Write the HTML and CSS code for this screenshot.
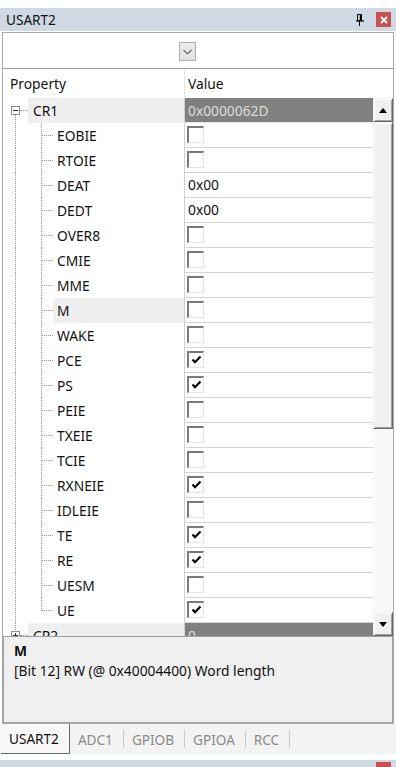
FILE: index.html
```html
<!DOCTYPE html>
<html>
<head>
<meta charset="utf-8">
<link rel="stylesheet" href="styles.css">
</head>
<body>
<div class="topgap"></div>
<div class="titlebar">
  <span class="title">USART2</span>
  <div class="tbtns">
    <svg class="pin" width="8" height="12" viewBox="0 0 8 12"><path d="M1.5 0.5h4v6h-4z" fill="none" stroke="#000" stroke-width="1"/><path d="M4.5 0.5v6" stroke="#000" stroke-width="1.5"/><path d="M0 7h8" stroke="#000" stroke-width="1.2"/><path d="M3.5 7v5" stroke="#000" stroke-width="1"/></svg>
    <span class="close"><svg width="8" height="8" viewBox="0 0 8 8"><path d="M1 1L7 7M7 1L1 7" stroke="#fff" stroke-width="1.8"/></svg></span>
  </div>
</div>
<div class="gap1"></div>
<div class="panel">
  <div class="toolbar">
    <span class="combo"><svg width="9" height="6" viewBox="0 0 9 6"><path d="M0.5 0.8L4.5 4.8L8.5 0.8" fill="none" stroke="#555" stroke-width="1.1"/></svg></span>
  </div>
  <div class="hdr">
    <div class="hp">Property</div>
    <div class="hv">Value</div>
  </div>
  <div class="grid">
    <div class="rows">
      <div class="row">
        <div class="prop cat"><span class="exp"><svg width="7" height="7" viewBox="0 0 7 7"><path d="M1 3.5h5" stroke="#333" stroke-width="1"/></svg></span><span class="hl"></span><span class="clbl">CR1</span></div>
        <div class="val catv">0x0000062D</div>
      </div>
      <div class="row"><div class="prop"><span class="g1"></span><span class="g2"></span><span class="br"></span><span class="lbl">EOBIE</span></div><div class="val"><span class="cb"></span></div></div>
      <div class="row"><div class="prop"><span class="g1"></span><span class="g2"></span><span class="br"></span><span class="lbl">RTOIE</span></div><div class="val"><span class="cb"></span></div></div>
      <div class="row"><div class="prop"><span class="g1"></span><span class="g2"></span><span class="br"></span><span class="lbl">DEAT</span></div><div class="val txt">0x00</div></div>
      <div class="row"><div class="prop"><span class="g1"></span><span class="g2"></span><span class="br"></span><span class="lbl">DEDT</span></div><div class="val txt">0x00</div></div>
      <div class="row"><div class="prop"><span class="g1"></span><span class="g2"></span><span class="br"></span><span class="lbl">OVER8</span></div><div class="val"><span class="cb"></span></div></div>
      <div class="row"><div class="prop"><span class="g1"></span><span class="g2"></span><span class="br"></span><span class="lbl">CMIE</span></div><div class="val"><span class="cb"></span></div></div>
      <div class="row"><div class="prop"><span class="g1"></span><span class="g2"></span><span class="br"></span><span class="lbl">MME</span></div><div class="val"><span class="cb"></span></div></div>
      <div class="row"><div class="prop"><span class="g1"></span><span class="g2"></span><span class="br"></span><span class="lbl sel">M</span></div><div class="val"><span class="cb"></span></div></div>
      <div class="row"><div class="prop"><span class="g1"></span><span class="g2"></span><span class="br"></span><span class="lbl">WAKE</span></div><div class="val"><span class="cb"></span></div></div>
      <div class="row"><div class="prop"><span class="g1"></span><span class="g2"></span><span class="br"></span><span class="lbl">PCE</span></div><div class="val"><span class="cb on"><svg width="11" height="10" viewBox="0 0 11 10"><path d="M1.5 4.5L4 7.2L9.5 1.5" fill="none" stroke="#000" stroke-width="2.2"/></svg></span></div></div>
      <div class="row"><div class="prop"><span class="g1"></span><span class="g2"></span><span class="br"></span><span class="lbl">PS</span></div><div class="val"><span class="cb on"><svg width="11" height="10" viewBox="0 0 11 10"><path d="M1.5 4.5L4 7.2L9.5 1.5" fill="none" stroke="#000" stroke-width="2.2"/></svg></span></div></div>
      <div class="row"><div class="prop"><span class="g1"></span><span class="g2"></span><span class="br"></span><span class="lbl">PEIE</span></div><div class="val"><span class="cb"></span></div></div>
      <div class="row"><div class="prop"><span class="g1"></span><span class="g2"></span><span class="br"></span><span class="lbl">TXEIE</span></div><div class="val"><span class="cb"></span></div></div>
      <div class="row"><div class="prop"><span class="g1"></span><span class="g2"></span><span class="br"></span><span class="lbl">TCIE</span></div><div class="val"><span class="cb"></span></div></div>
      <div class="row"><div class="prop"><span class="g1"></span><span class="g2"></span><span class="br"></span><span class="lbl">RXNEIE</span></div><div class="val"><span class="cb on"><svg width="11" height="10" viewBox="0 0 11 10"><path d="M1.5 4.5L4 7.2L9.5 1.5" fill="none" stroke="#000" stroke-width="2.2"/></svg></span></div></div>
      <div class="row"><div class="prop"><span class="g1"></span><span class="g2"></span><span class="br"></span><span class="lbl">IDLEIE</span></div><div class="val"><span class="cb"></span></div></div>
      <div class="row"><div class="prop"><span class="g1"></span><span class="g2"></span><span class="br"></span><span class="lbl">TE</span></div><div class="val"><span class="cb on"><svg width="11" height="10" viewBox="0 0 11 10"><path d="M1.5 4.5L4 7.2L9.5 1.5" fill="none" stroke="#000" stroke-width="2.2"/></svg></span></div></div>
      <div class="row"><div class="prop"><span class="g1"></span><span class="g2"></span><span class="br"></span><span class="lbl">RE</span></div><div class="val"><span class="cb on"><svg width="11" height="10" viewBox="0 0 11 10"><path d="M1.5 4.5L4 7.2L9.5 1.5" fill="none" stroke="#000" stroke-width="2.2"/></svg></span></div></div>
      <div class="row"><div class="prop"><span class="g1"></span><span class="g2"></span><span class="br"></span><span class="lbl">UESM</span></div><div class="val"><span class="cb"></span></div></div>
      <div class="row"><div class="prop"><span class="g1"></span><span class="g2 last"></span><span class="br"></span><span class="lbl">UE</span></div><div class="val"><span class="cb on"><svg width="11" height="10" viewBox="0 0 11 10"><path d="M1.5 4.5L4 7.2L9.5 1.5" fill="none" stroke="#000" stroke-width="2.2"/></svg></span></div></div>
      <div class="row">
        <div class="prop cat cat2"><span class="exp"><svg width="7" height="7" viewBox="0 0 7 7"><path d="M1 3.5h5M3.5 1v5" stroke="#333" stroke-width="1"/></svg></span><span class="hl"></span><span class="clbl">CR2</span></div>
        <div class="val catv">0</div>
      </div>
    </div>
    <div class="vscroll">
      <div class="sbtn"><svg width="8" height="5" viewBox="0 0 8 5"><path d="M0 5L4 0L8 5Z" fill="#000"/></svg></div>
      <div class="thumb"></div>
      <div class="track"></div>
      <div class="sbtn"><svg width="8" height="5" viewBox="0 0 8 5"><path d="M0 0L4 5L8 0Z" fill="#000"/></svg></div>
    </div>
  </div>
  <div class="desc">
    <div class="dname">M</div>
    <div class="dtext">[Bit 12] RW (@ 0x40004400) Word length</div>
  </div>
</div>
<div class="tabs">
  <span class="tab active">USART2</span>
  <span class="tab">ADC1</span>
  <span class="tab">GPIOB</span>
  <span class="tab">GPIOA</span>
  <span class="tab">RCC</span>
</div>
<div class="gap2"></div>
<div class="nextbar"><span class="nextclose"></span></div>
</body>
</html>
```
FILE: styles.css
```css
* { box-sizing: border-box; }
html, body { margin: 0; padding: 0; }
body {
  width: 396px;
  height: 767px;
  overflow: hidden;
  background: #fff;
  font-family: "Noto Sans", "Open Sans", sans-serif;
  font-size: 13.8px;
  color: #111;
}
.topgap { height: 8px; }
.titlebar {
  height: 23px;
  background: #cfd9e4;
  display: flex;
  align-items: center;
  justify-content: space-between;
  padding: 0 5px 0 6px;
}
.title { font-size: 13.6px; color: #111; }
.tbtns { display: flex; align-items: center; gap: 12px; }
.pin { display: block; }
.close {
  width: 15px; height: 15px;
  background: #c75050;
  display: flex; align-items: center; justify-content: center;
}
.close svg { display: block; }
.gap1 { height: 1px; }
.panel {
  margin: 0 2px 0 2px;
  border: 1px solid #a8a8a8;
  background: #fff;
}
.toolbar {
  height: 36px;
  border-bottom: 1px solid #a0a0a0;
  display: flex;
  align-items: center;
  padding-left: 176px;
  padding-top: 2px;
}
.combo {
  width: 17px; height: 19px;
  border: 1px solid #acacac;
  background: linear-gradient(#ececec, #e1e1e1);
  display: flex; align-items: center; justify-content: center;
}
.combo svg { display: block; }
.hdr { height: 29px; display: flex; }
.hp { width: 181px; padding-left: 7px; line-height: 29px; }
.hv { flex: 1; border-left: 1px solid #e3e3e3; padding-left: 3px; line-height: 29px; }
.grid { display: flex; height: 538px; overflow: hidden; }
.rows { flex: 1; overflow: hidden; }
.row { display: flex; height: 25px; }
.prop { width: 181px; flex: none; display: flex; height: 25px; }
.g1 { width: 13px; flex: none; border-right: 1px dotted #9a9a9a; }
.g2 { width: 26px; flex: none; border-right: 1px dotted #9a9a9a; }
.g2.last { align-self: flex-start; height: 13px; }
.br { width: 11px; flex: none; align-self: center; border-top: 1px dotted #9a9a9a; height: 0; }
.lbl { flex: 1; padding-left: 4px; line-height: 25px; }
.lbl.sel { background: #efefef; }
.prop.cat {
  padding-left: 8px;
  align-items: center;
  background: repeating-linear-gradient(#9a9a9a 0 1px, transparent 1px 2px) 12px 17px / 1px 8px no-repeat;
}
.prop.cat2 {
  background: repeating-linear-gradient(#9a9a9a 0 1px, transparent 1px 2px) 12px 0 / 1px 8px no-repeat;
}
.exp {
  width: 9px; height: 9px; flex: none;
  border: 1px solid #919191;
  background: #fff;
  display: flex; align-items: center; justify-content: center;
}
.exp svg { display: block; }
.hl { width: 8px; flex: none; border-top: 1px dotted #9a9a9a; height: 0; }
.clbl { flex: 1; align-self: stretch; background: #efefef; padding-left: 5px; line-height: 25px; }
.val {
  flex: 1;
  border-left: 1px solid #d0d0d0;
  border-bottom: 1px solid #d4d4d4;
  display: flex;
  align-items: center;
  padding-left: 2px;
}
.val.txt { padding-left: 3px; line-height: 24px; }
.val.catv { background: #808080; color: #dcdcdc; padding-left: 3px; border-bottom-color: #e8e8e8; }
.cb {
  width: 17px; height: 17px;
  border-top: 2px solid #7a7a7a;
  border-left: 2px solid #7a7a7a;
  border-right: 1px solid #e3e3e3;
  border-bottom: 1px solid #e3e3e3;
  background: #fff;
  display: flex; align-items: center; justify-content: center;
  margin-top: -1px;
}
.cb svg { display: block; }
.vscroll { width: 20px; flex: none; display: flex; flex-direction: column; }
.sbtn, .thumb {
  background: #f0f0f0;
  border-style: solid;
  border-width: 1px;
  border-color: #f0f0f0 #696969 #696969 #f0f0f0;
  box-shadow: inset 1px 1px #fff, inset -1px -1px #a0a0a0;
}
.sbtn { height: 24px; flex: none; display: flex; align-items: center; justify-content: center; }
.sbtn svg { display: block; }
.thumb { height: 307px; flex: none; }
.track {
  flex: 1;
  background: repeating-conic-gradient(#f4f4f4 0 25%, #fdfdfd 0 50%) 0 0 / 2px 2px;
}
.desc {
  height: 87px;
  border: 1px solid #a0a0a0;
  background: #f0f0f0;
  padding: 4px 10px;
}
.dname { font-weight: bold; line-height: 20px; }
.dtext { line-height: 20px; }
.tabs {
  height: 30px;
  background: #f3f3f3;
  display: flex;
  align-items: stretch;
  padding-left: 1px;
  font-size: 13.6px;
}
.tab {
  display: flex; align-items: center;
  color: #8a8a8a;
}
.tab:not(.active) { border-right: 1px solid #c8c8c8; margin: 6px 0; padding: 0 10px 0 8px; }
.tab.active {
  color: #111;
  border-right: 1px solid #6a6a6a;
  border-bottom: 1px solid #6a6a6a;
  padding: 0 10px 0 8px;
  background: #f7f7f7;
}
.gap2 { height: 6px; }
.nextbar { height: 8px; background: #cfd9e4; display: flex; justify-content: flex-end; padding-right: 5px; padding-top: 2px; }
.nextclose { width: 15px; height: 6px; background: #c75050; }
```
